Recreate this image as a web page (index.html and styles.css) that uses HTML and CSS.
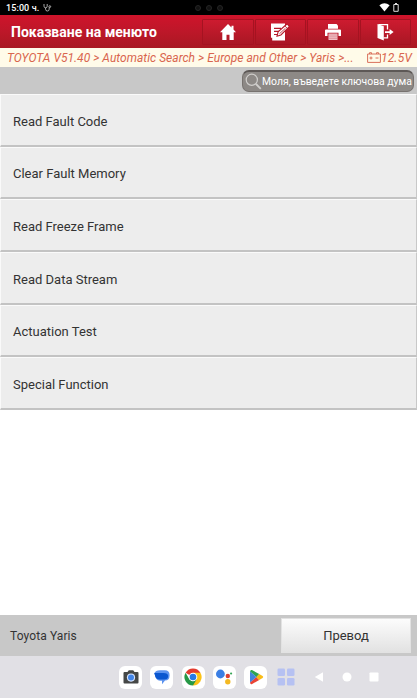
FILE: index.html
```html
<!DOCTYPE html>
<html lang="bg">
<head>
    <meta charset="utf-8">
    <meta name="viewport" content="width=device-width, initial-scale=1">
    <title>Показване на менюто</title>
    <link rel="stylesheet" href="styles.css">
</head>
<body>
<div class="screen">
    <div class="status-bar">
        <span class="time">15:00 ч.</span>
        <svg class="plug" width="9" height="9" viewBox="0 0 9 9" fill="none" stroke="#bbb" stroke-width="0.9"><path d="M1 1v2.2q0 1.6 1.6 1.6T4.2 3.2V1M2.6 4.8v1.4q0 1.8 1.8 1.8t1.8-1.8V4.4"/><circle cx="6.8" cy="3.6" r="0.9"/></svg>
        <div class="dots"><i></i><i></i><i></i></div>
        <svg class="wifi" width="11" height="9" viewBox="0 0 11 9"><path fill="#fff" d="M.4 2.2Q5.5-1.8 10.6 2.2L5.5 8.4z"/></svg>
        <svg class="battery" width="6" height="9" viewBox="0 0 6 9"><path fill="none" stroke="#ddd" d="M.8 1.5h4.4v6.8H.8z"/><path fill="#ddd" d="M2 0h2v1.5H2z"/></svg>
    </div>
    <div class="header">
        <h1 class="title">Показване на менюто</h1>
        <div class="tools">
            <button class="tool" aria-label="Home"><svg width="18" height="18" viewBox="0 0 18 18"><path fill="#fff" d="M9 1 1 9.2h2.3V17h4.2v-5.2h3V17h4.2V9.2H17l-2.5-2.6V2.8h-2v1.8z"/></svg></button>
            <button class="tool" aria-label="Edit"><svg width="20" height="20" viewBox="0 0 20 20"><path fill="#fff" d="M1 1.5h14v17H2.2v-2.8H1z"/><path stroke="#b51827" stroke-width="1.2" d="M4 6.3h7M4 9.4h5M4 12.5h4"/><path fill="#fff" stroke="#b51827" stroke-width="1.1" d="m7 14.2 1.1-4.3 8.3-7.4q.7-.6 1.4.1l1.1 1.2q.6.7-.1 1.3l-7.9 7.8z"/><path stroke="#b51827" stroke-width=".8" d="m15 3.9 2.5 2.7M9.5 11.7l6-5.5"/></svg></button>
            <button class="tool" aria-label="Print"><svg width="18" height="18" viewBox="0 0 18 18"><path fill="#fff" d="M4 1h8.5L14 2.6v3.1H4z"/><path fill="#fff" d="M2 6.5h14q1 0 1 1V13h-2.5V9.8h-11V13H1V7.5q0-1 1-1z"/><path fill="#f1bfc4" d="M4.5 10.5h9V17h-9z"/><path stroke="#d98b94" stroke-width=".7" d="M5 12h8M5 13.8h8M5 15.5h8"/></svg></button>
            <button class="tool" aria-label="Exit"><svg width="18" height="18" viewBox="0 0 18 18"><path fill="#fff" d="m1.5 1 6.3 2.2v14.3l-6.3-2.6z"/><path fill="none" stroke="#fff" stroke-width="1.3" d="M2.5 1.7h9v4.9M7.5 14.8h4v-3.2"/><path fill="#fff" d="M9 8.2h4.6V6L17.6 9l-4 3.1v-2.2H9z"/></svg></button>
        </div>
    </div>
    <div class="breadcrumb">
        <span class="path">TOYOTA V51.40 &gt; Automatic Search &gt; Europe and Other &gt; Yaris &gt;...</span>
        <svg class="car-battery" width="14" height="11" viewBox="0 0 14 11" fill="none" stroke="#d9705b"><path d="M.6 2h12.8v8.4H.6zM2.5 2V.7h2V2M9.5 2V.7h2V2M2.5 6h3M8.5 6h3M4 4.5v3"/></svg>
        <span class="voltage">12.5V</span>
    </div>
    <div class="search-bar">
        <div class="search-box">
            <svg class="magnifier" width="17" height="17" viewBox="0 0 17 17" fill="none" stroke="#d0cecc"><circle cx="6.8" cy="6.8" r="5.6" stroke-width="1.2"/><path stroke-width="1.8" d="m11 11 4.8 4.8"/></svg>
            <span class="placeholder">Моля, въведете ключова дума</span>
        </div>
    </div>
    <div class="menu">
        <div class="menu-item">Read Fault Code</div>
        <div class="menu-item">Clear Fault Memory</div>
        <div class="menu-item">Read Freeze Frame</div>
        <div class="menu-item">Read Data Stream</div>
        <div class="menu-item">Actuation Test</div>
        <div class="menu-item">Special Function</div>
    </div>
    <div class="footer">
        <span class="vehicle">Toyota Yaris</span>
        <button class="translate">Превод</button>
    </div>
    <div class="nav-bar">
        <div class="app"><svg width="16" height="16" viewBox="0 0 16 16"><path fill="#454746" d="M1.5 3H4.5L5.8 1.2h4.4L11.5 3h3q1 0 1 1v9.5q0 1-1 1h-13q-1 0-1-1V4q0-1 1-1z"/><circle cx="8" cy="8.6" r="4.1" fill="#d7e6ff"/><circle cx="8" cy="8.6" r="3" fill="#4285e8"/></svg></div>
        <div class="app"><svg width="16" height="16" viewBox="0 0 16 16"><path fill="#5c93ef" d="M6 1.2h4.8q4.8 0 4.8 5 0 5.2-4.6 5.4L8 15.3v-3.6H6.5Q3 11.7 1.8 8.5L.3 4.2Q1.6 1.2 6 1.2z"/><path fill="#0b57d0" d="M.3 4h9.2q4.6 0 4.6 3.3 0 3.2-4 3.2H6Q2.3 10.5 1.3 7.8 1 6 .3 4z"/></svg></div>
        <div class="app"><svg width="18" height="18" viewBox="0 0 18 18"><path fill="#e33b2e" d="M9 9 1.6 4.7A8.5 8.5 0 0 1 16.4 4.7z"/><path fill="#fbc116" d="M9 9V4.7h7.4A8.5 8.5 0 0 1 9 17.5z"/><path fill="#269846" d="M1.6 4.7 5.3 11.2 9 13.3l3.7-2.1L9 17.5A8.5 8.5 0 0 1 1.6 4.7z"/><circle cx="9" cy="9" r="4.3" fill="#fff"/><circle cx="9" cy="9" r="3.3" fill="#2779e5"/></svg></div>
        <div class="app"><svg width="18" height="18" viewBox="0 0 18 18"><circle cx="5.4" cy="6" r="4.4" fill="#3b7fe4"/><circle cx="12.8" cy="8" r="2.2" fill="#db4034"/><circle cx="12.8" cy="13.8" r="2.7" fill="#f4b922"/><circle cx="16.1" cy="5.5" r="1.1" fill="#33a554"/></svg></div>
        <div class="app"><svg width="16" height="16" viewBox="0 0 16 16"><path fill="#e94335" d="M2 13.5 8.3 8l2.9 3-7.5 4.2q-1.4.5-1.7-1.7z"/><path fill="#30a451" d="M2 2.5Q2.3.5 4 1.1L11.2 5 8.5 8.2z"/><path fill="#4285db" d="M2 2.5 8.5 8 2 13.5z"/><path fill="#f9bb16" d="m11.2 5 3.4 2q1.3 1 0 2l-3.4 2-2.9-3z"/></svg></div>
        <svg class="all-apps" width="18" height="18" viewBox="0 0 18 18" fill="#b6c1f2"><rect x=".5" y=".5" width="7.5" height="7.5" rx="1.3"/><rect x="10" y=".5" width="7.5" height="7.5" rx="1.3"/><rect x=".5" y="10" width="7.5" height="7.5" rx="1.3"/><rect x="10" y="10" width="7.5" height="7.5" rx="1.3"/></svg>
        <svg class="sys-keys" width="66" height="12" viewBox="0 0 66 12" fill="#fff"><path d="M.8 6 9 1.3v9.4z"/><circle cx="33" cy="6" r="4.5"/><rect x="55.5" y="1.5" width="9" height="9" rx=".8"/></svg>
    </div>
</div>
</body>
</html>
```
FILE: styles.css
```css
body {
    margin: 0;
    font-family: Roboto, "Liberation Sans", sans-serif;
    color: #333;
}
button {
    font-family: inherit;
    padding: 0;
    border: none;
}
.screen {
    display: flex;
    flex-direction: column;
    width: 417px;
    height: 698px;
    overflow: hidden;
    background: #fff;
}
.status-bar {
    display: flex;
    align-items: center;
    flex: none;
    height: 15px;
    padding: 0 18px 0 6px;
    background: #000;
    color: #fff;
}
.time {
    width: 33px;
    font-size: 9px;
    font-weight: 500;
    letter-spacing: 0.1px;
    white-space: nowrap;
}
.plug {
    margin-left: 4px;
}
.dots {
    display: flex;
    gap: 5px;
    margin-left: 143px;
}
.dots i {
    width: 4px;
    height: 4px;
    border: 1px solid #252525;
    border-radius: 50%;
    background: #111;
}
.wifi {
    margin-left: auto;
}
.battery {
    margin-left: 3px;
}

/* red title bar */
.header {
    display: flex;
    align-items: center;
    justify-content: space-between;
    flex: none;
    box-sizing: border-box;
    height: 33px;
    padding: 0 6px 0 11px;
    background: linear-gradient(#cf142b, #bd1729 50%, #a91822);
}
.title {
    margin: 0;
    padding-top: 1px;
    font-size: 14px;
    font-weight: 700;
    color: #fff;
    white-space: nowrap;
}
.tools {
    display: flex;
    gap: 1px;
}
.tool {
    display: flex;
    align-items: center;
    justify-content: center;
    box-sizing: border-box;
    width: 51.5px;
    height: 26px;
    border: 1px solid #a51321;
    border-radius: 1px;
    background: linear-gradient(#cd1b30, #a91724);
}

.breadcrumb {
    display: flex;
    align-items: center;
    flex: none;
    height: 19px;
    padding: 0 5px 0 7px;
    background: #fffbe9;
    color: #d9654e;
    font-size: 12px;
    font-style: italic;
    white-space: nowrap;
}
.path {
    width: 347px;
    letter-spacing: 0.03px;
}
.car-battery {
    flex: none;
    margin-left: 13px;
}
.voltage {
    margin-left: auto;
    letter-spacing: 0.2px;
}
.search-bar {
    display: flex;
    justify-content: flex-end;
    align-items: center;
    flex: none;
    height: 27px;
    padding-right: 3px;
    background: #c8c8c8;
}
.search-box {
    display: flex;
    align-items: center;
    box-sizing: border-box;
    width: 172px;
    height: 22px;
    padding-left: 2px;
    border: 1px solid #77726f;
    border-top: 2px solid #5d5856;
    border-radius: 7px;
    background: #8d8986;
}
.magnifier {
    flex: none;
}
.placeholder {
    color: #fff;
    font-size: 10.4px;
    white-space: nowrap;
}

.menu {
    display: grid;
    grid-template-rows: repeat(6, 1fr);
    flex: none;
    height: 316px;
}
.menu-item {
    display: flex;
    align-items: center;
    box-sizing: border-box;
    padding: 3px 0 0 12px;
    border: 1px solid #fafafa;
    border-right-color: #c8c8c8;
    border-bottom: 2px solid #c3c3c3;
    background: #ededed;
    font-size: 13px;
}

.footer {
    display: flex;
    align-items: center;
    justify-content: space-between;
    flex: none;
    box-sizing: border-box;
    height: 41px;
    margin-top: auto;
    padding: 0 6px 0 10px;
    background: #c8c8c8;
}
.vehicle {
    padding-top: 1px;
    font-size: 12px;
    letter-spacing: 0.1px;
}
.translate {
    width: 130px;
    height: 35px;
    border: 1px solid #e2e2e2;
    background: linear-gradient(#fcfcfc, #e2e2e2);
    color: #333;
    font-size: 13px;
}
.nav-bar {
    display: flex;
    align-items: center;
    flex: none;
    height: 42px;
    padding-left: 119px;
    background: #e1e0e5;
}
.app {
    display: flex;
    align-items: center;
    justify-content: center;
    width: 23px;
    height: 23px;
    margin-right: 8.3px;
    border-radius: 6px;
    background: #fff;
}
.all-apps {
    margin-left: 2px;
}
.sys-keys {
    margin-left: 19px;
}
```
